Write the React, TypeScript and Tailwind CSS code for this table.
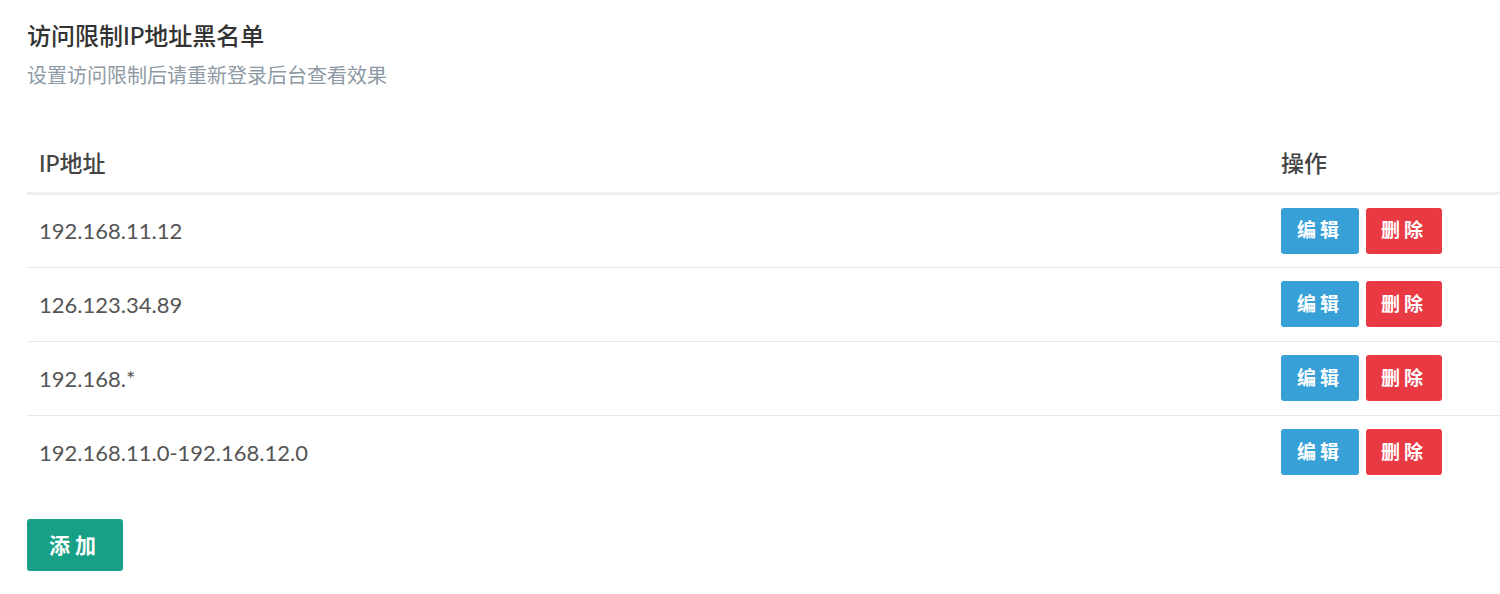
import React from "react";

const rows = ["192.168.11.12", "126.123.34.89", "192.168.*", "192.168.11.0-192.168.12.0"];

export default function App() {
  return (
    <div
      className="min-h-[594px] w-[1500px] bg-white pl-[27px] pt-[21px] text-[#555]"
      style={{ fontFamily: '"Lato", "Noto Sans CJK SC", sans-serif' }}
    >
      <h1 className="text-[24px] font-medium leading-[30px] text-[#333]">访问限制IP地址黑名单</h1>
      <p className="mt-[11px] text-[20px] leading-[26px] text-[#8d9aa5]">设置访问限制后请重新登录后台查看效果</p>

      <table className="mt-[47px] w-full border-collapse">
        <thead>
          <tr className="border-b-[3px] border-[#eeeeee]">
            <th className="h-[58px] px-3 text-left text-[23px] font-medium text-[#444]">IP地址</th>
            <th className="w-[231px] px-3 text-left text-[23px] font-medium text-[#444]">操作</th>
          </tr>
        </thead>
        <tbody>
          {rows.map((ip) => (
            <tr key={ip} className="border-b border-[#e8e8e8] last:border-b-0">
              <td className="h-[74px] px-3 text-[22px] text-[#555]">{ip}</td>
              <td className="px-3">
                <div className="flex gap-[7px]">
                  <button className="h-[46px] w-[78px] rounded-[3px] bg-[#37a0d6] text-[19px] font-bold tracking-[4px] text-white">
                    编辑
                  </button>
                  <button className="h-[46px] w-[76px] rounded-[3px] bg-[#e93a44] text-[19px] font-bold tracking-[4px] text-white">
                    删除
                  </button>
                </div>
              </td>
            </tr>
          ))}
        </tbody>
      </table>

      <button className="mt-[30px] h-[52px] w-[96px] rounded-[3px] bg-[#18a086] text-[21px] font-bold tracking-[5px] text-white">
        添加
      </button>
    </div>
  );
}
